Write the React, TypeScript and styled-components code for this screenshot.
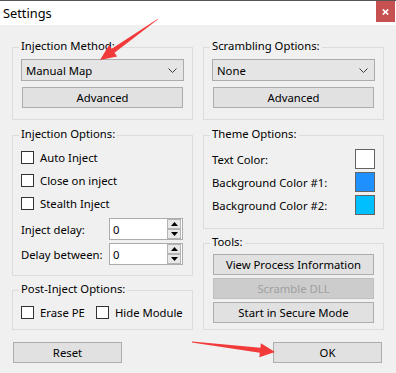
import * as React from 'react';
import styled, { createGlobalStyle } from 'styled-components';

const Global = createGlobalStyle`
    html, body {
        margin: 0;
        padding: 0;
        background: #f0f0f0;
    }
    body {
        font-family: 'Noto Sans', 'Open Sans', 'DejaVu Sans', sans-serif;
        font-size: 11.3px;
        color: #000;
    }
`;

const Window = styled.div`
    position: relative;
    width: 396px;
    height: 373px;
    overflow: hidden;
    background: #f0f0f0;
`;

const TitleBar = styled.div`
    display: flex;
    align-items: flex-start;
    justify-content: space-between;
    height: 24px;
    border-top: 1px solid #555;
    background: #fff;
`;

const Title = styled.span`
    padding-left: 3px;
    font-size: 12.8px;
    line-height: 24px;
    color: #000;
`;

const CloseBtn = styled.div`
    display: flex;
    align-items: center;
    justify-content: center;
    width: 19px;
    height: 21px;
    margin-right: 1px;
    background: #c75050;
`;

const Body = styled.div`
    display: flex;
    flex-direction: column;
    padding: 22px 13px 0 12px;
`;

const Columns = styled.div`
    display: grid;
    grid-template-columns: 181px 181px;
    column-gap: 10px;
`;

const Column = styled.div`
    display: flex;
    flex-direction: column;
`;

const Group = styled.div<{ $h: number; $mt?: number }>`
    display: flex;
    flex-direction: column;
    box-sizing: border-box;
    height: ${(p) => p.$h}px;
    margin-top: ${(p) => p.$mt || 0}px;
    padding: 0 8px;
    border: 1px solid #dcdcdc;
`;

const Caption = styled.div`
    align-self: flex-start;
    height: 16px;
    margin: -10px 0 0 -2px;
    padding: 0 2px 1px;
    line-height: 16px;
    background: #f0f0f0;
`;

const Combo = styled.div`
    display: flex;
    align-items: center;
    justify-content: space-between;
    box-sizing: border-box;
    height: 22px;
    margin-top: 4px;
    padding: 0 6px 0 4px;
    border: 1px solid #acacac;
    background: #e5e5e5;
`;

const Button = styled.div<{ $disabled?: boolean; $mt?: number; $w?: number }>`
    display: flex;
    align-items: center;
    justify-content: center;
    box-sizing: border-box;
    height: 21px;
    width: ${(p) => (p.$w ? `${p.$w}px` : 'auto')};
    margin: ${(p) => p.$mt || 0}px ${(p) => (p.$w ? 0 : 1)}px 0;
    border: 1px solid ${(p) => (p.$disabled ? '#bfbfbf' : '#adadad')};
    background: ${(p) => (p.$disabled ? '#cccccc' : '#e1e1e1')};
    color: ${(p) => (p.$disabled ? '#a0a0a0' : '#000')};
    white-space: nowrap;
`;

const CheckRow = styled.div<{ $mt?: number; $h?: number }>`
    display: flex;
    align-items: center;
    gap: 11px;
    height: ${(p) => p.$h || 23}px;
    margin-top: ${(p) => p.$mt || 0}px;
`;

const Check = styled.label`
    display: flex;
    align-items: center;
    flex-shrink: 0;
    gap: 6px;
    white-space: nowrap;
`;

const Box = styled.span`
    box-sizing: border-box;
    width: 13px;
    height: 13px;
    border: 1px solid #333;
    background: #fff;
`;

const FieldRow = styled.div<{ $mt: number }>`
    display: flex;
    align-items: center;
    justify-content: space-between;
    height: 22px;
    margin-top: ${(p) => p.$mt}px;
`;

const Spinner = styled.div`
    display: flex;
    align-items: center;
    justify-content: space-between;
    box-sizing: border-box;
    width: 74px;
    height: 22px;
    margin-right: 1px;
    padding: 0 1px 0 3px;
    border: 1px solid #acacac;
    background: #fff;
`;

const SpinArrows = styled.div`
    display: flex;
    flex-direction: column;
`;

const SpinBtn = styled.div`
    display: flex;
    align-items: center;
    justify-content: center;
    box-sizing: border-box;
    width: 14px;
    height: 10px;
    border: 1px solid #b4b4b4;
    background: #e8e8e8;
`;

const ThemeRow = styled.div<{ $mt: number }>`
    display: flex;
    align-items: center;
    justify-content: space-between;
    height: 20px;
    margin-top: ${(p) => p.$mt}px;
`;

const Swatch = styled.span<{ $color: string }>`
    box-sizing: border-box;
    width: 20px;
    height: 20px;
    border: 1px solid #646464;
    background: ${(p) => p.$color};
`;

const Footer = styled.div`
    display: flex;
    justify-content: space-between;
    margin-top: 12px;
    padding: 0 1px 0 1px;
`;

const Overlay = styled.svg`
    position: absolute;
    left: 0;
    top: 0;
    pointer-events: none;
`;

function Checkbox({ label }: { label: string }) {
    return (
        <Check>
            <Box />
            <span>{label}</span>
        </Check>
    );
}

function NumberField({ label, value, mt }: { label: string; value: string; mt: number }) {
    return (
        <FieldRow $mt={mt}>
            <span>{label}</span>
            <Spinner>
                <span>{value}</span>
                <SpinArrows>
                    <SpinBtn>
                        <svg width="7" height="4" viewBox="0 0 7 4">
                            <path d="M0 4 L3.5 0 L7 4 Z" fill="#000" />
                        </svg>
                    </SpinBtn>
                    <SpinBtn>
                        <svg width="7" height="4" viewBox="0 0 7 4">
                            <path d="M0 0 L3.5 4 L7 0 Z" fill="#000" />
                        </svg>
                    </SpinBtn>
                </SpinArrows>
            </Spinner>
        </FieldRow>
    );
}

function Select({ value }: { value: string }) {
    return (
        <Combo>
            <span>{value}</span>
            <svg width="9" height="5" viewBox="0 0 9 5">
                <path d="M0.5 0.5 L4.5 4.5 L8.5 0.5" fill="none" stroke="#404040" strokeWidth="1" />
            </svg>
        </Combo>
    );
}

export default function App() {
    return (
        <Window>
            <Global />
            <TitleBar>
                <Title>Settings</Title>
                <CloseBtn>
                    <svg width="7" height="6" viewBox="0 0 7 6">
                        <path d="M0.8 0.5 L6.2 5.5 M6.2 0.5 L0.8 5.5" stroke="#fff" strokeWidth="1.7" />
                    </svg>
                </CloseBtn>
            </TitleBar>
            <Body>
                <Columns>
                    <Column>
                        <Group $h={73}>
                            <Caption>Injection Method:</Caption>
                            <Select value="Manual Map" />
                            <Button $mt={6}>Advanced</Button>
                        </Group>
                        <Group $h={141} $mt={15}>
                            <Caption>Injection Options:</Caption>
                            <CheckRow $mt={3}>
                                <Checkbox label="Auto Inject" />
                            </CheckRow>
                            <CheckRow>
                                <Checkbox label="Close on inject" />
                            </CheckRow>
                            <CheckRow>
                                <Checkbox label="Stealth Inject" />
                            </CheckRow>
                            <NumberField label="Inject delay:" value="0" mt={3} />
                            <NumberField label="Delay between:" value="0" mt={3} />
                        </Group>
                        <Group $h={40} $mt={14}>
                            <Caption>Post-Inject Options:</Caption>
                            <CheckRow $mt={2} $h={24}>
                                <Checkbox label="Erase PE" />
                                <Checkbox label="Hide Module" />
                            </CheckRow>
                        </Group>
                    </Column>
                    <Column>
                        <Group $h={73}>
                            <Caption>Scrambling Options:</Caption>
                            <Select value="None" />
                            <Button $mt={6}>Advanced</Button>
                        </Group>
                        <Group $h={94} $mt={15}>
                            <Caption>Theme Options:</Caption>
                            <ThemeRow $mt={6}>
                                <span>Text Color:</span>
                                <Swatch $color="#ffffff" />
                            </ThemeRow>
                            <ThemeRow $mt={3}>
                                <span>Background Color #1:</span>
                                <Swatch $color="#1e90ff" />
                            </ThemeRow>
                            <ThemeRow $mt={3}>
                                <span>Background Color #2:</span>
                                <Swatch $color="#00bfff" />
                            </ThemeRow>
                        </Group>
                        <Group $h={87} $mt={14}>
                            <Caption>Tools:</Caption>
                            <Button $mt={3}>View Process Information</Button>
                            <Button $mt={3} $disabled>
                                Scramble DLL
                            </Button>
                            <Button $mt={3}>Start in Secure Mode</Button>
                        </Group>
                    </Column>
                </Columns>
                <Footer>
                    <Button $w={109}>Reset</Button>
                    <Button $w={109}>OK</Button>
                </Footer>
            </Body>
            <Overlay width="396" height="373" viewBox="0 0 396 373">
                <polygon
                    points="158.3,18.6 157.7,19.4 114.5,52.8 117.1,56.5 100,60 109.1,45.1 111.7,48.8"
                    fill="#f23a3a"
                />
                <polygon
                    points="192.1,341.5 191.9,342.5 259.8,352.7 259.3,357.2 275,352 260.9,343.3 260.4,347.7"
                    fill="#f23a3a"
                />
            </Overlay>
        </Window>
    );
}
